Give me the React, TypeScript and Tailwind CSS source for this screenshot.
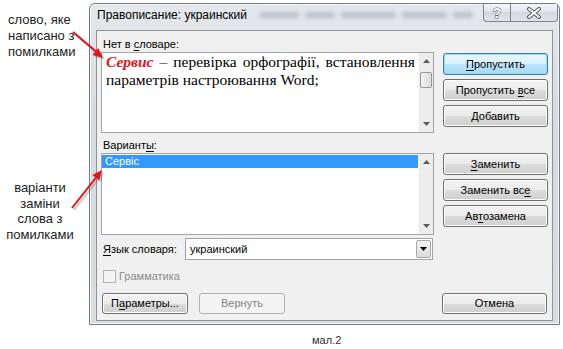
import React from "react";

const U = ({ children }: { children: React.ReactNode }) => (
  <span className="underline underline-offset-[2px] decoration-[1px]">{children}</span>
);

const Btn = ({
  children,
  className = "",
  def = false,
  disabled = false,
}: {
  children: React.ReactNode;
  className?: string;
  def?: boolean;
  disabled?: boolean;
}) => {
  let cls =
    "flex items-center justify-center rounded-[3px] border text-[11px] leading-none whitespace-pre ";
  if (disabled) {
    cls += "border-[#adb2b5] bg-[#f4f4f4] text-[#838383] ";
  } else if (def) {
    cls +=
      "border-[#3c7fb1] bg-[linear-gradient(#eaf6fd_0%,#d9f0fc_50%,#bee6fd_50%,#a7d9f5_100%)] shadow-[inset_0_0_0_1px_#8fe0f7] text-black ";
  } else {
    cls +=
      "border-[#707070] bg-[linear-gradient(#f2f2f2_0%,#ebebeb_50%,#dddddd_50%,#cfcfcf_100%)] shadow-[inset_0_0_0_1px_#fcfcfc] text-black ";
  }
  return (
    <div className={cls + className}>
      <span>{children}</span>
    </div>
  );
};

const ArrowBox = ({ up }: { up: boolean }) => (
  <div className="flex h-[16px] w-[15px] items-center justify-center">
    <svg width="7" height="4" viewBox="0 0 7 4">
      {up ? (
        <polygon points="0,4 7,4 3.5,0" fill="#5a5a5a" />
      ) : (
        <polygon points="0,0 7,0 3.5,4" fill="#5a5a5a" />
      )}
    </svg>
  </div>
);

const ScrollBar = ({ thumb }: { thumb: boolean }) => (
  <div className="flex h-full w-[15px] shrink-0 flex-col bg-[#ededed] border-l border-[#f6f6f6]">
    <ArrowBox up />
    {thumb && (
      <div className="mx-[1px] mt-[3px] h-[16px] rounded-[2px] border border-[#979797] bg-[linear-gradient(90deg,#f3f3f3,#dcdcdc)]" />
    )}
    <div className="flex-1" />
    <ArrowBox up={false} />
  </div>
);

export default function App() {
  return (
    <div className="relative h-[349px] w-[563px] overflow-hidden bg-white font-['Liberation_Sans',Arial,sans-serif] text-black">
      <div className="flex">
        {/* Left annotations */}
        <div className="flex w-[89px] shrink-0 flex-col text-[13px] leading-[16px] text-[#222]">
          <div className="pl-[8px] pt-[12px]">
            <div>слово, яке</div>
            <div>написано з</div>
            <div>помилками</div>
          </div>
          <div className="mt-[120px] w-[80px] text-center leading-[15.7px]">
            <div>варіанти</div>
            <div>заміни</div>
            <div>слова з</div>
            <div>помилками</div>
          </div>
        </div>

        {/* Dialog window */}
        <div className="mt-[3px] flex h-[322px] w-[471px] shrink-0 flex-col rounded-t-[6px] border border-[#737c87] bg-[linear-gradient(#e4e8ed,#d6dbe1_40%,#dadee3)] shadow-[inset_0_0_0_1px_rgba(255,255,255,0.65)]">
          {/* Title bar */}
          <div className="flex h-[26px] shrink-0 items-start">
            <div className="whitespace-nowrap pl-[7px] pt-[4px] text-[12px] leading-[14px] text-black">
              Правописание: украинский
            </div>
            <div className="ml-[12px] mr-[10px] flex flex-1 items-center gap-[6px] pt-[8px] opacity-40 blur-[2px]">
              <div className="h-[6px] w-[40px] rounded-full bg-[#7d858e]" />
              <div className="h-[6px] w-[30px] rounded-full bg-[#7d858e]" />
              <div className="h-[6px] w-[55px] rounded-full bg-[#7d858e]" />
              <div className="h-[6px] w-[45px] rounded-full bg-[#7d858e]" />
              <div className="h-[6px] w-[20px] rounded-full bg-[#7d858e]" />
            </div>
            <div className="mr-[4px] flex">
              <div className="flex h-[18px] w-[27px] items-center justify-center rounded-bl-[4px] border border-t-0 border-r-0 border-[#7c8591] bg-[linear-gradient(#f3f5f8,#dfe3e9_50%,#d3d8df_50%,#e0e4ea)]">
                <svg width="14" height="14" viewBox="0 0 14 14">
                  <text
                    x="7"
                    y="12"
                    textAnchor="middle"
                    fontSize="14"
                    fontWeight="bold"
                    fontFamily="Liberation Sans, Arial, sans-serif"
                    fill="#ffffff"
                    stroke="#555b63"
                    strokeWidth="1"
                    paintOrder="stroke"
                  >
                    ?
                  </text>
                </svg>
              </div>
              <div className="flex h-[18px] w-[48px] items-center justify-center rounded-br-[4px] border border-t-0 border-[#7c8591] bg-[linear-gradient(#f3f5f8,#dfe3e9_50%,#d3d8df_50%,#e0e4ea)]">
                <svg width="16" height="12" viewBox="0 0 16 12">
                  <path d="M3 2 L13 10 M13 2 L3 10" stroke="#555b63" strokeWidth="4" strokeLinecap="round" />
                  <path d="M3 2 L13 10 M13 2 L3 10" stroke="#ffffff" strokeWidth="2" strokeLinecap="round" />
                </svg>
              </div>
            </div>
          </div>

          {/* Client area */}
          <div className="ml-[6px] flex h-[291px] w-[457px] flex-col border border-[#8e9197] bg-[#f0f0f0] pl-[4px] text-[11px]">
            <div className="ml-[2px] mt-[6px] h-[14px] leading-[14px]">
              Нет в <U>с</U>ловаре:
            </div>
            <div className="mt-[1px] flex">
              <div className="flex h-[81px] w-[333px] border border-[#a0a4ab] bg-white">
                <div className="flex-1 pl-[4px] pr-[3px] font-['Liberation_Serif','Times_New_Roman',serif] text-[15.5px] leading-[18px]">
                  <div className="text-justify [text-align-last:justify] whitespace-nowrap">
                    <span className="font-bold italic text-[#e0161b]">Сервис</span> – перевірка орфографії, встановлення
                  </div>
                  <div>параметрів настроювання Word;</div>
                </div>
                <ScrollBar thumb />
              </div>
              <div className="ml-[9px] flex w-[105px] flex-col gap-[4px] pt-[1px]">
                <Btn def className="h-[22px]">
                  <U>П</U>ропустить
                </Btn>
                <Btn className="h-[22px]">
                  Пропустить <U>в</U>се
                </Btn>
                <Btn className="h-[22px]">
                  <U>Д</U>обавить
                </Btn>
              </div>
            </div>

            <div className="ml-[2px] mt-[5px] h-[14px] leading-[14px]">
              Вариант<U>ы</U>:
            </div>
            <div className="mt-[1px] flex">
              <div className="flex h-[82px] w-[333px] border border-[#a0a4ab] bg-white">
                <div className="flex-1 pt-[1px]">
                  <div className="h-[13px] bg-[#3399ff] pl-[3px] leading-[13px] text-white">Сервіс</div>
                </div>
                <ScrollBar thumb={false} />
              </div>
              <div className="ml-[9px] flex w-[105px] flex-col gap-[4px]">
                <Btn className="h-[22px]">
                  <U>З</U>аменить
                </Btn>
                <Btn className="h-[22px]">
                  Заменить вс<U>е</U>
                </Btn>
                <Btn className="h-[22px]">
                  Ав<U>т</U>озамена
                </Btn>
              </div>
            </div>

            <div className="mt-[3px] flex h-[22px] items-center">
              <div className="ml-[2px] w-[82px] leading-[14px]">
                <U>Я</U>зык словаря:
              </div>
              <div className="flex h-[22px] w-[248px] items-center border border-[#a0a4ab] bg-white">
                <div className="flex-1 pl-[4px] text-[11px]">украинский</div>
                <div className="mr-[1px] flex h-[18px] w-[15px] items-center justify-center rounded-[2px] border border-[#a9a9a9] bg-[linear-gradient(#f4f4f4,#dcdcdc)]">
                  <svg width="7" height="4" viewBox="0 0 7 4">
                    <polygon points="0,0 7,0 3.5,4" fill="#000" />
                  </svg>
                </div>
              </div>
            </div>

            <div className="ml-[2px] mt-[10px] flex h-[13px] items-center">
              <div className="h-[13px] w-[13px] border border-[#b5b5b5] bg-[#f4f4f4]" />
              <div className="ml-[3px] leading-[13px] text-[#8d8d8d]">Грамматика</div>
            </div>

            <div className="mt-[10px] flex">
              <Btn className="ml-[1px] h-[21px] w-[86px]">
                П<U>а</U>раметры...
              </Btn>
              <Btn disabled className="ml-[11px] h-[21px] w-[86px]">
                Вернуть
              </Btn>
              <Btn className="ml-[157px] h-[21px] w-[105px]">Отмена</Btn>
            </div>
          </div>
        </div>
      </div>

      <div className="mt-[8px] pl-[312px] text-[11px] leading-[14px] text-[#333]">мал.2</div>

      {/* Red arrows */}
      <svg className="absolute left-0 top-0" width="563" height="349" viewBox="0 0 563 349">
        <g opacity="0.25" transform="translate(2,2)">
          <line x1="73" y1="32" x2="96" y2="51.5" stroke="#555" strokeWidth="2.5" />
          <polygon points="103,58 92.4,55.1 98.2,48.1" fill="#555" />
          <line x1="72" y1="208" x2="95.8" y2="177.9" stroke="#555" strokeWidth="2.5" />
          <polygon points="102,170 99.3,180.6 92.3,175.1" fill="#555" />
        </g>
        <line x1="73" y1="32" x2="96" y2="51.5" stroke="#e0161b" strokeWidth="2" />
        <polygon points="103,58 92.4,55.1 98.2,48.1" fill="#e0161b" />
        <line x1="72" y1="208" x2="95.8" y2="177.9" stroke="#e0161b" strokeWidth="2" />
        <polygon points="102,170 99.3,180.6 92.3,175.1" fill="#e0161b" />
      </svg>
    </div>
  );
}
